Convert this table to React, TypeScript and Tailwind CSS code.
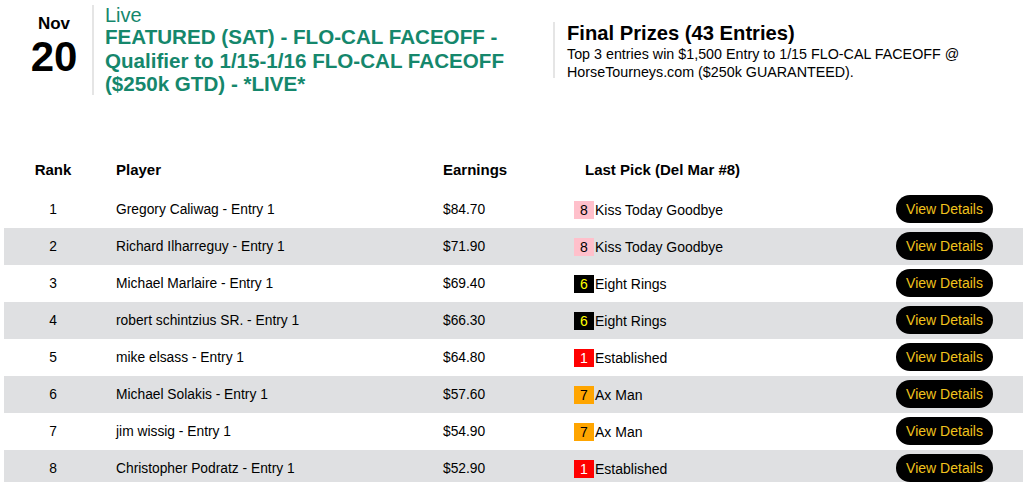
const rows = [
  { rank: 1, player: "Gregory Caliwag - Entry 1", earnings: "$84.70", num: "8", horse: "Kiss Today Goodbye", badge: "bg-[#ffc0cb] text-black" },
  { rank: 2, player: "Richard Ilharreguy - Entry 1", earnings: "$71.90", num: "8", horse: "Kiss Today Goodbye", badge: "bg-[#ffc0cb] text-black" },
  { rank: 3, player: "Michael Marlaire - Entry 1", earnings: "$69.40", num: "6", horse: "Eight Rings", badge: "bg-black text-[#ffff00]" },
  { rank: 4, player: "robert schintzius SR. - Entry 1", earnings: "$66.30", num: "6", horse: "Eight Rings", badge: "bg-black text-[#ffff00]" },
  { rank: 5, player: "mike elsass - Entry 1", earnings: "$64.80", num: "1", horse: "Established", badge: "bg-[#ff0000] text-white" },
  { rank: 6, player: "Michael Solakis - Entry 1", earnings: "$57.60", num: "7", horse: "Ax Man", badge: "bg-[#ffa500] text-black" },
  { rank: 7, player: "jim wissig - Entry 1", earnings: "$54.90", num: "7", horse: "Ax Man", badge: "bg-[#ffa500] text-black" },
  { rank: 8, player: "Christopher Podratz - Entry 1", earnings: "$52.90", num: "1", horse: "Established", badge: "bg-[#ff0000] text-white" },
];

export default function App() {
  return (
    <div className="h-[482px] overflow-hidden bg-white font-['Liberation_Sans',Arial,sans-serif] text-black">
      {/* Header */}
      <div className="flex pt-[5px]">
        <div className="flex w-[92px] flex-col items-center pt-[9px] pl-[16px]">
          <span className="text-[17px] font-bold leading-[20px]">Nov</span>
          <span className="text-[42px] font-bold leading-[46px]">20</span>
        </div>
        <div className="h-[90px] w-[2px] bg-[#e5e5e5]" />
        <div className="w-[450px] pl-[11px] text-[#15876c]">
          <div className="text-[20px] leading-[20px]">Live</div>
          <div className="text-[20.6px] font-bold leading-[23.5px]">
            FEATURED (SAT) - FLO-CAL FACEOFF - Qualifier to 1/15-1/16 FLO-CAL FACEOFF ($250k GTD) - *LIVE*
          </div>
        </div>
        <div className="mt-[17px] ml-[9px] h-[56px] w-[2px] bg-[#e5e5e5]" />
        <div className="pl-[12px] pt-[16px]">
          <div className="text-[20.2px] font-bold leading-[24px]">Final Prizes (43 Entries)</div>
          <div className="w-[430px] text-[14.3px] leading-[18px]">
            Top 3 entries win $1,500 Entry to 1/15 FLO-CAL FACEOFF @ HorseTourneys.com ($250k GUARANTEED).
          </div>
        </div>
      </div>

      {/* Table */}
      <div className="mt-[55px] ml-[4px]">
        <div className="flex h-[40px] items-center text-[15px] font-bold">
          <div className="w-[98px] text-center">Rank</div>
          <div className="w-[327px] pl-[14px]">Player</div>
          <div className="w-[131px] pl-[14px]">Earnings</div>
          <div className="pl-[25px]">Last Pick (Del Mar #8)</div>
        </div>
        {rows.map((r) => (
          <div
            key={r.rank}
            className={`flex h-[37px] items-center text-[13.8px] ${r.rank % 2 === 0 ? "bg-[#dfe0e2]" : "bg-white"}`}
          >
            <div className="w-[98px] pt-[3px] text-center">{r.rank}</div>
            <div className="w-[327px] pt-[3px] pl-[14px]">{r.player}</div>
            <div className="w-[131px] pt-[3px] pl-[14px]">{r.earnings}</div>
            <div className="flex w-[336px] items-center pt-[2px] pl-[14px]">
              <span className={`flex h-[18px] w-[20px] items-center justify-center text-[14px] ${r.badge}`}>
                {r.num}
              </span>
              <span className="pl-[1px] text-[14px]">{r.horse}</span>
            </div>
            <button
              type="button"
              className="h-[28px] w-[97px] rounded-full bg-black text-[14px] text-[#f0c21c]"
            >
              View Details
            </button>
          </div>
        ))}
      </div>
    </div>
  );
}
